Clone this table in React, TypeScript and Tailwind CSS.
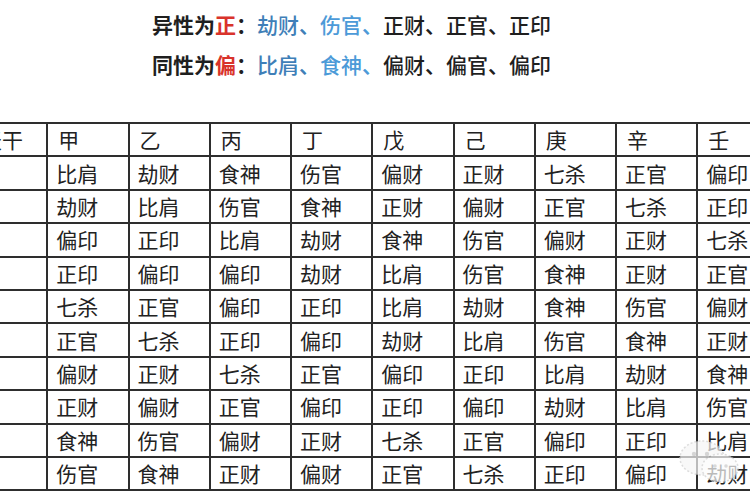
const stems = ["天干", "甲", "乙", "丙", "丁", "戊", "己", "庚", "辛", "壬", "癸"];

const rows = [
  ["比肩", "劫财", "食神", "伤官", "偏财", "正财", "七杀", "正官", "偏印", "正印"],
  ["劫财", "比肩", "伤官", "食神", "正财", "偏财", "正官", "七杀", "正印", "偏印"],
  ["偏印", "正印", "比肩", "劫财", "食神", "伤官", "偏财", "正财", "七杀", "正官"],
  ["正印", "偏印", "偏印", "劫财", "比肩", "伤官", "食神", "正财", "正官", "七杀"],
  ["七杀", "正官", "偏印", "正印", "比肩", "劫财", "食神", "伤官", "偏财", "正财"],
  ["正官", "七杀", "正印", "偏印", "劫财", "比肩", "伤官", "食神", "正财", "偏财"],
  ["偏财", "正财", "七杀", "正官", "偏印", "正印", "比肩", "劫财", "食神", "伤官"],
  ["正财", "偏财", "正官", "偏印", "正印", "偏印", "劫财", "比肩", "伤官", "食神"],
  ["食神", "伤官", "偏财", "正财", "七杀", "正官", "偏印", "正印", "比肩", "劫财"],
  ["伤官", "食神", "正财", "偏财", "正官", "七杀", "正印", "偏印", "劫财", "比肩"],
];

const Rule = ({ label, mark, blue, rest }: { label: string; mark: string; blue: string[]; rest: string[] }) => (
  <p className="h-[40px] flex items-center text-[21px] leading-none font-medium text-[#1f1f1f] whitespace-nowrap">
    <span className="font-bold">{label}</span>
    <span className="font-bold text-[#d9332b]">{mark}</span>
    <span className="font-bold">：</span>
    {blue.map((w, i) => (
      <span key={w} className={i === 0 ? "text-[#3f7fb8]" : "text-[#4c9ad8]"}>
        {w}、
      </span>
    ))}
    {rest.map((w, i) => (
      <span key={w}>
        {w}
        {i < rest.length - 1 ? "、" : ""}
      </span>
    ))}
  </p>
);

const Watermark = () => (
  <svg className="absolute left-[676px] top-[436px] opacity-70" width="70" height="52" viewBox="0 0 70 52">
    <ellipse cx="26" cy="22" rx="22" ry="17" fill="#f6f6f6" stroke="#cfcfcf" strokeWidth="1.5" strokeDasharray="2 2" />
    <ellipse cx="44" cy="32" rx="18" ry="14" fill="#fbfbfb" stroke="#cfcfcf" strokeWidth="1.5" strokeDasharray="2 2" />
    <circle cx="18" cy="18" r="2.2" fill="#c4c4c4" />
    <circle cx="31" cy="18" r="2.2" fill="#c4c4c4" />
    <circle cx="39" cy="30" r="1.8" fill="#cacaca" />
    <circle cx="50" cy="30" r="1.8" fill="#cacaca" />
  </svg>
);

export default function App() {
  return (
    <div
      className="relative w-[750px] h-[500px] overflow-hidden bg-white"
      style={{ fontFamily: '"Noto Sans CJK SC", "Noto Sans", sans-serif' }}
    >
      <div className="pl-[152px] pt-[4px]">
        <Rule label="异性为" mark="正" blue={["劫财", "伤官"]} rest={["正财", "正官", "正印"]} />
        <Rule label="同性为" mark="偏" blue={["比肩", "食神"]} rest={["偏财", "偏官", "偏印"]} />
      </div>

      <div className="mt-[38px] ml-[-35px] w-max grid grid-cols-[repeat(11,81.25px)] auto-rows-[33.4px] border-t-2 border-l-2 border-[#2e2e2e] text-[21px] leading-none text-[#222]">
        {stems.map((s, i) => (
          <div
            key={s}
            className={`flex items-center ${i === 0 ? "pl-[14px]" : "pl-[10px]"} border-r-2 border-b-2 border-[#2e2e2e] whitespace-nowrap`}
          >
            {s}
          </div>
        ))}
        {rows.map((r, ri) => (
          <>
            <div key={`h${ri}`} className="border-r-2 border-b-2 border-[#2e2e2e]" />
            {r.map((c, ci) => (
              <div key={`${ri}-${ci}`} className="flex items-center pl-[8px] border-r-2 border-b-2 border-[#2e2e2e] whitespace-nowrap">
                {c}
              </div>
            ))}
          </>
        ))}
      </div>

      <Watermark />
    </div>
  );
}
